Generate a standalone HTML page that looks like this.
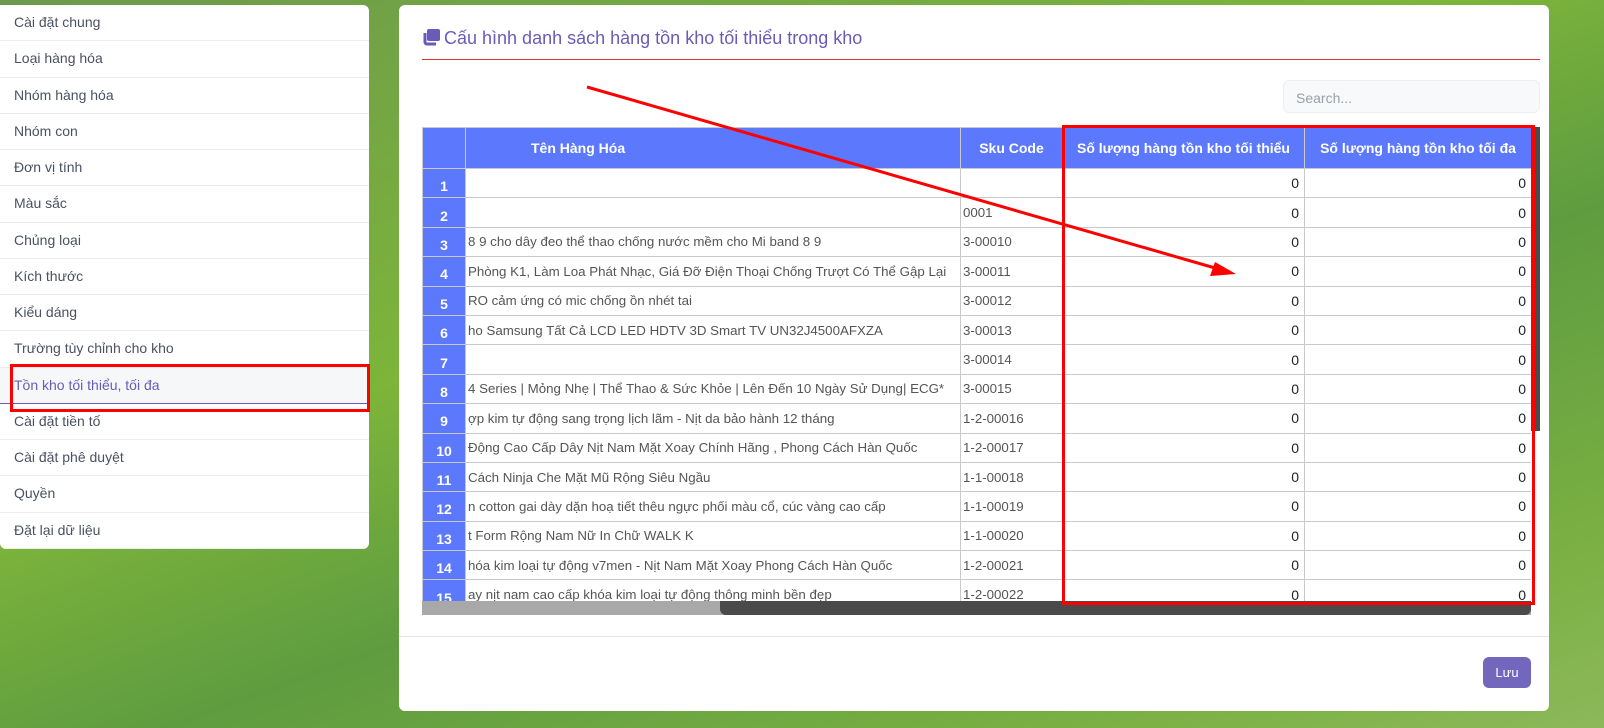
<!DOCTYPE html>
<html><head><meta charset="utf-8"><style>
*{box-sizing:border-box;margin:0;padding:0}
body{width:1604px;height:728px;overflow:hidden;font-family:"Liberation Sans",sans-serif;position:relative;
background:linear-gradient(160deg,#6c9a4c 0%,#7db53a 40%,#5f9c40 60%,#7ab043 85%,#8db85a 100%);}
.side{position:absolute;left:0;top:5px;width:369px;height:544px;background:#fff;border-radius:0 6px 6px 6px;overflow:hidden}
.side div{height:36.27px;line-height:34px;padding-left:14px;font-size:14px;color:#4a5160;border-bottom:1px solid #ececec}
.side div.act{background:#f6f7f9;color:#6a5bb8;border-bottom:1px solid #6a5bb8}
.main{position:absolute;left:399px;top:5px;width:1150px;height:706px;background:#fff;border-radius:6px}
.title{position:absolute;left:23px;top:23px;font-size:18px;color:#6a5bb8}
.hr{position:absolute;left:23px;top:54px;width:1118px;height:1px;background:#d33}
.search{position:absolute;left:884px;top:75px;width:257px;height:33px;border:1px solid #eceef0;border-radius:6px;background:#f8f9fa;font-size:14px;color:#9aa0a8;padding:9px 12px}
.wrap{position:absolute;left:23px;top:122px;width:1109px;height:474px;overflow:hidden}
table{border-collapse:collapse;table-layout:fixed;font-size:13.3px;width:1109px}
th{background:#5c78fd;color:#fff;height:41px;font-size:14px;border:1px solid #c9c9c9;font-weight:bold}
td{height:29.4px;border:1px solid #c9c9c9;color:#555;white-space:nowrap;overflow:hidden;padding:0 2px}
td.n{background:#5c78fd;color:#fff;font-weight:bold;text-align:center;padding-top:6px;font-size:14px}
td.r{text-align:right;color:#222;padding-right:5px;font-size:14px}
.hs{position:absolute;left:321px;top:596px;width:811px;height:14px;background:#4a4a4a;border-radius:0 0 6px 6px}
.hst{position:absolute;left:23px;top:596px;width:1109px;height:14px;background:#a8a8a8}
.vs{position:absolute;left:1132px;top:122px;width:9px;height:304px;background:#4a4a4a}
.foot{position:absolute;left:0;top:631px;width:1150px;height:1px;background:#e5e5e5}
.btn{position:absolute;left:1084px;top:652px;width:48px;height:31px;background:#7366bd;color:#fff;border-radius:6px;font-size:13px;text-align:center;line-height:31px}
</style></head><body>
<div class="side">
<div>Cài đặt chung</div><div>Loại hàng hóa</div><div>Nhóm hàng hóa</div><div>Nhóm con</div><div>Đơn vị tính</div><div>Màu sắc</div><div>Chủng loại</div><div>Kích thước</div><div>Kiểu dáng</div><div>Trường tùy chỉnh cho kho</div><div class="act">Tồn kho tối thiểu, tối đa</div><div>Cài đặt tiền tố</div><div>Cài đặt phê duyệt</div><div>Quyền</div><div>Đặt lại dữ liệu</div>
</div>
<div class="main">
<div class="title"><svg width="18" height="17" viewBox="0 0 18 17" style="vertical-align:-2px;margin-right:4px"><rect x="5" y="0" width="13" height="12" rx="2" fill="#6a5bb8"/><path d="M3 4v9a2 2 0 0 0 2 2h9" stroke="#6a5bb8" stroke-width="3" fill="none"/></svg>Cấu hình danh sách hàng tồn kho tối thiểu trong kho</div>
<div class="hr"></div>
<div class="search">Search...</div>
<div class="hst"></div>
<div class="wrap">
<table>
<colgroup><col style="width:43px"><col style="width:495px"><col style="width:102px"><col style="width:242px"><col style="width:227px"></colgroup>
<tr><th></th><th style="text-align:left;padding-left:65px">Tên Hàng Hóa</th><th>Sku Code</th><th>Số lượng hàng tồn kho tối thiểu</th><th>Số lượng hàng tồn kho tối đa</th></tr>
<tr><td class="n">1</td><td></td><td></td><td class="r">0</td><td class="r">0</td></tr>
<tr><td class="n">2</td><td></td><td>0001</td><td class="r">0</td><td class="r">0</td></tr>
<tr><td class="n">3</td><td>8 9 cho dây đeo thể thao chống nước mềm cho Mi band 8 9</td><td>3-00010</td><td class="r">0</td><td class="r">0</td></tr>
<tr><td class="n">4</td><td>Phòng K1, Làm Loa Phát Nhạc, Giá Đỡ Điện Thoại Chống Trượt Có Thể Gập Lại</td><td>3-00011</td><td class="r">0</td><td class="r">0</td></tr>
<tr><td class="n">5</td><td>RO cảm ứng có mic chống ồn nhét tai</td><td>3-00012</td><td class="r">0</td><td class="r">0</td></tr>
<tr><td class="n">6</td><td>ho Samsung Tất Cả LCD LED HDTV 3D Smart TV UN32J4500AFXZA</td><td>3-00013</td><td class="r">0</td><td class="r">0</td></tr>
<tr><td class="n">7</td><td></td><td>3-00014</td><td class="r">0</td><td class="r">0</td></tr>
<tr><td class="n">8</td><td>4 Series | Mỏng Nhẹ | Thể Thao &amp; Sức Khỏe | Lên Đến 10 Ngày Sử Dụng| ECG*</td><td>3-00015</td><td class="r">0</td><td class="r">0</td></tr>
<tr><td class="n">9</td><td>ợp kim tự động sang trọng lịch lãm - Nịt da bảo hành 12 tháng</td><td>1-2-00016</td><td class="r">0</td><td class="r">0</td></tr>
<tr><td class="n">10</td><td>Động Cao Cấp Dây Nịt Nam Mặt Xoay Chính Hãng , Phong Cách Hàn Quốc</td><td>1-2-00017</td><td class="r">0</td><td class="r">0</td></tr>
<tr><td class="n">11</td><td>Cách Ninja Che Mặt Mũ Rộng Siêu Ngầu</td><td>1-1-00018</td><td class="r">0</td><td class="r">0</td></tr>
<tr><td class="n">12</td><td>n cotton gai dày dặn hoạ tiết thêu ngực phối màu cổ, cúc vàng cao cấp</td><td>1-1-00019</td><td class="r">0</td><td class="r">0</td></tr>
<tr><td class="n">13</td><td>t Form Rộng Nam Nữ In Chữ WALK K</td><td>1-1-00020</td><td class="r">0</td><td class="r">0</td></tr>
<tr><td class="n">14</td><td>hóa kim loại tự động v7men - Nịt Nam Mặt Xoay Phong Cách Hàn Quốc</td><td>1-2-00021</td><td class="r">0</td><td class="r">0</td></tr>
<tr><td class="n">15</td><td>ay nịt nam cao cấp khóa kim loại tự động thông minh bền đẹp</td><td>1-2-00022</td><td class="r">0</td><td class="r">0</td></tr>
</table>
</div>
<div class="hs"></div>
<div class="vs"></div>
<div class="foot"></div>
<div class="btn">Lưu</div>
</div>
<svg style="position:absolute;left:0;top:0" width="1604" height="728">
<rect x="11.5" y="365.5" width="357" height="45" fill="none" stroke="#f00" stroke-width="3"/>
<rect x="1063.5" y="126.5" width="470" height="477" fill="none" stroke="#f00" stroke-width="3"/>
<line x1="587" y1="87" x2="1215" y2="268" stroke="#f00" stroke-width="3"/>
<polygon points="1236,274 1210,276 1215,262" fill="#f00"/>
</svg>
</body></html>
